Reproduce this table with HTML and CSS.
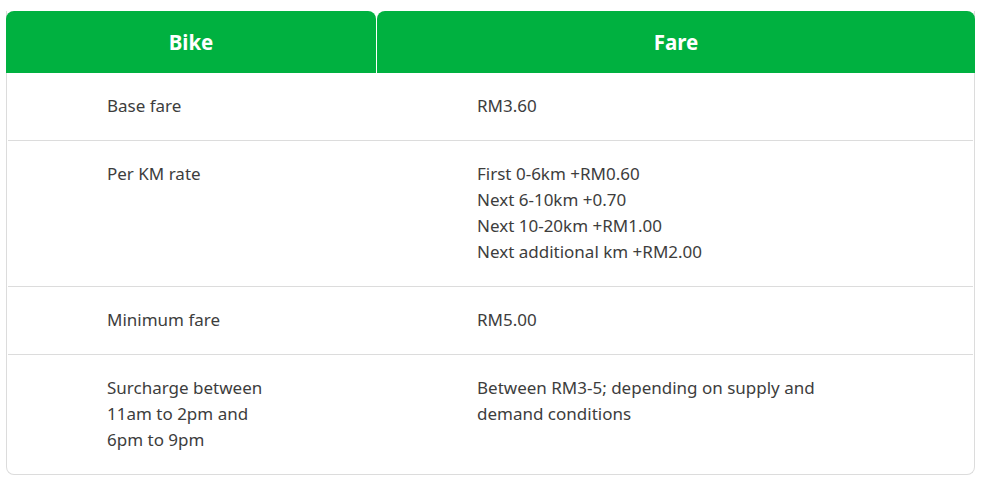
FILE: index.html
```html
<!DOCTYPE html>
<html lang="en">
<head>
<meta charset="utf-8">
<title>Bike fares</title>
<link rel="stylesheet" href="styles.css">
</head>
<body>
<div class="fare-table">
  <div class="head">
    <div class="head-cell">Bike</div>
    <div class="head-cell">Fare</div>
  </div>
  <div class="row">
    <div class="cell">Base fare</div>
    <div class="cell">RM3.60</div>
  </div>
  <div class="row">
    <div class="cell">Per KM rate</div>
    <div class="cell">First 0-6km +RM0.60<br>Next 6-10km +0.70<br>Next 10-20km +RM1.00<br>Next additional km +RM2.00</div>
  </div>
  <div class="row">
    <div class="cell">Minimum fare</div>
    <div class="cell">RM5.00</div>
  </div>
  <div class="row">
    <div class="cell">Surcharge between<br>11am to 2pm and<br>6pm to 9pm</div>
    <div class="cell">Between RM3-5; depending on supply and<br>demand conditions</div>
  </div>
</div>
</body>
</html>
```

FILE: styles.css
```css
html, body {
  margin: 0;
  padding: 0;
  background: #ffffff;
}

body {
  padding: 11px 0 0 6px;
  font-family: "Noto Sans", "Open Sans", sans-serif;
  color: #3d3d3d;
}

.fare-table {
  width: 969px;
  box-sizing: border-box;
  border: 1px solid #dcdcdc;
  border-top: none;
  border-radius: 0 0 8px 8px;
}

.head {
  display: grid;
  grid-template-columns: 370px 1fr;
  column-gap: 1px;
  margin: 0 -1px;
}

.head-cell {
  background: #00b140;
  color: #ffffff;
  font-weight: 700;
  font-size: 20.5px;
  height: 62px;
  display: flex;
  align-items: center;
  justify-content: center;
  border-radius: 8px 8px 0 0;
}

.row {
  display: grid;
  grid-template-columns: 369px 1fr;
  column-gap: 1px;
  border-bottom: 1px solid #dcdcdc;
  margin: 0 1px;
}

.row:last-child {
  border-bottom: none;
}

.cell {
  font-size: 17px;
  line-height: 26px;
  padding: 20px 20px 21px 99px;
}
```
